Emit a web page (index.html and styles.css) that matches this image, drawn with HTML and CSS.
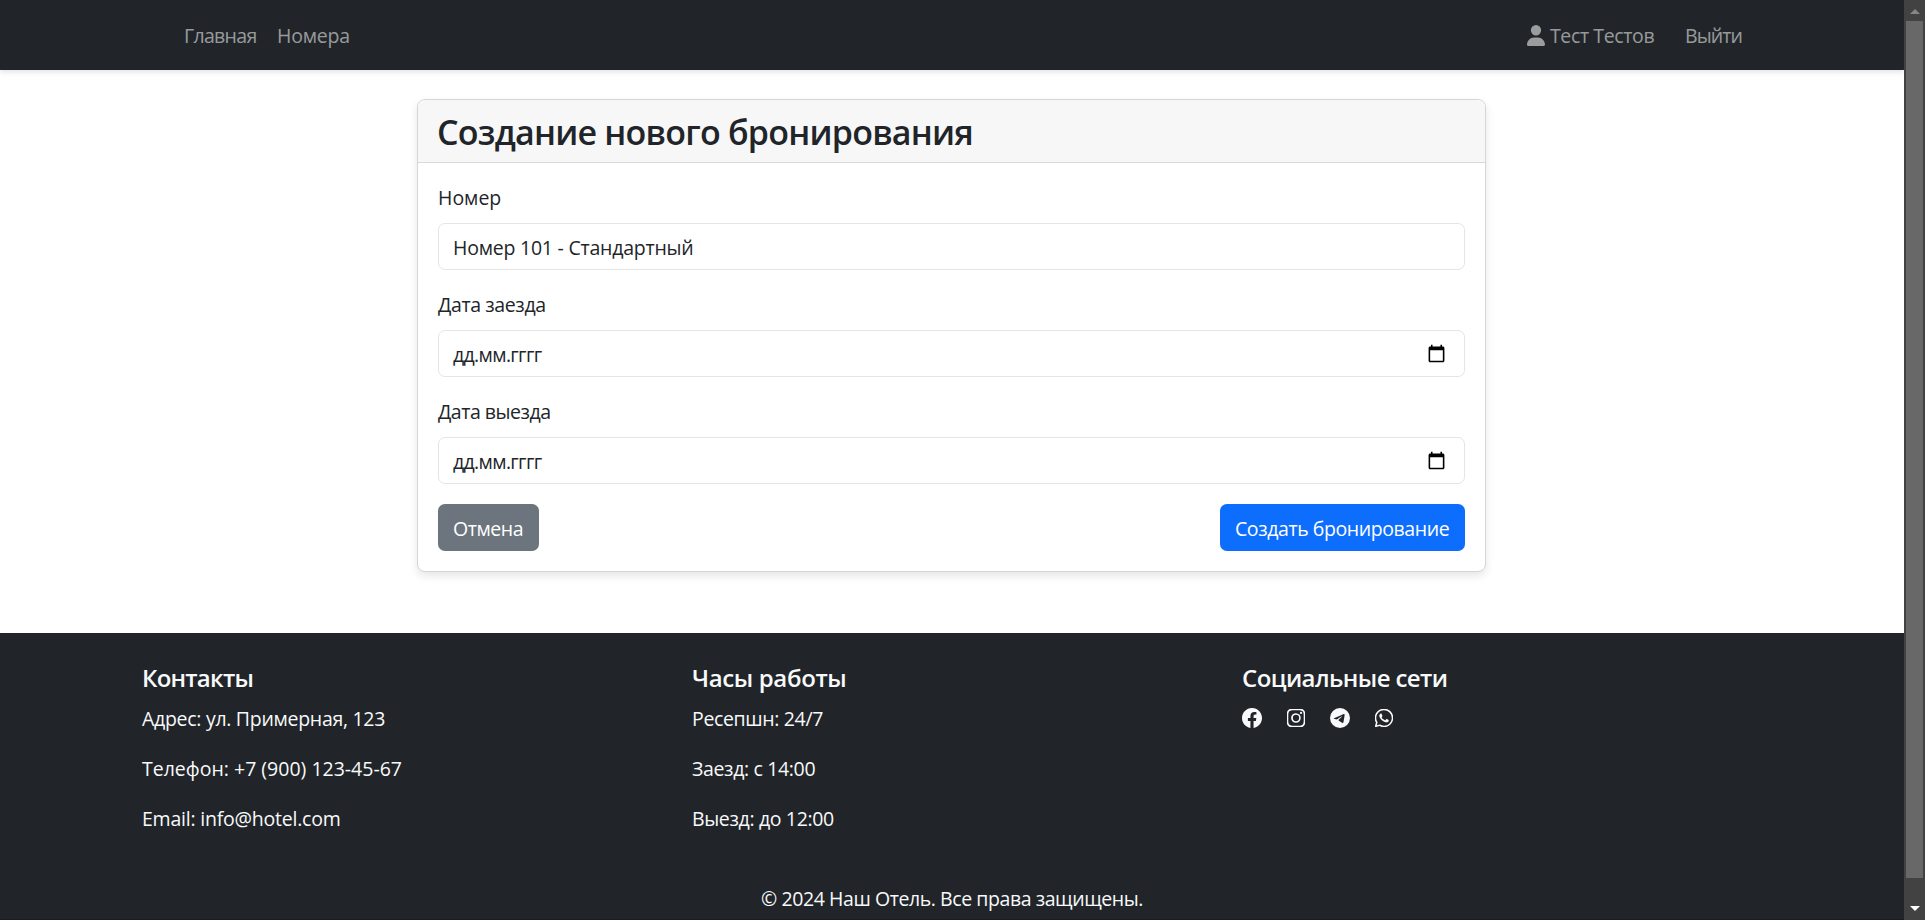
FILE: index.html
```
<!DOCTYPE html>
<html lang="ru">
<head>
<meta charset="utf-8">
<title>Создание нового бронирования</title>
<link rel="stylesheet" href="styles.css">
</head>
<body>
<div class="page">
  <nav class="navbar">
    <div class="nav-group">
      <a class="nav-home">Главная</a>
      <a class="nav-rooms">Номера</a>
    </div>
    <div class="nav-group nav-user-group">
      <a class="nav-user"><svg class="user-icon" viewBox="0 0 448 512" preserveAspectRatio="none"><path d="M224 256A128 128 0 1 0 224 0a128 128 0 1 0 0 256zm-45.7 48C79.8 304 0 383.8 0 482.3C0 498.7 13.3 512 29.7 512H418.3c16.4 0 29.7-13.3 29.7-29.7C448 383.8 368.2 304 269.7 304H178.3z"/></svg><span>Тест Тестов</span></a>
      <a class="nav-logout">Выйти</a>
    </div>
  </nav>
  <main class="main">
    <section class="card">
      <header class="card-header"><h3 class="card-title">Создание нового бронирования</h3></header>
      <div class="card-body">
        <div class="field">
          <label class="label">Номер</label>
          <div class="control"><span class="room-value">Номер 101 - Стандартный</span></div>
        </div>
        <div class="field">
          <label class="label label-in">Дата заезда</label>
          <div class="control"><span class="date-value">дд.мм.гггг</span><svg class="calendar" viewBox="0 0 24 24"><path d="M20 3h-1V1h-2v2H7V1H5v2H4c-1.1 0-2 .9-2 2v16c0 1.1.9 2 2 2h16c1.1 0 2-.9 2-2V5c0-1.1-.9-2-2-2zm0 18H4V8h16v13z"/></svg></div>
        </div>
        <div class="field">
          <label class="label label-out">Дата выезда</label>
          <div class="control"><span class="date-value">дд.мм.гггг</span><svg class="calendar" viewBox="0 0 24 24"><path d="M20 3h-1V1h-2v2H7V1H5v2H4c-1.1 0-2 .9-2 2v16c0 1.1.9 2 2 2h16c1.1 0 2-.9 2-2V5c0-1.1-.9-2-2-2zm0 18H4V8h16v13z"/></svg></div>
        </div>
        <div class="actions">
          <a class="btn btn-cancel">Отмена</a>
          <a class="btn btn-submit">Создать бронирование</a>
        </div>
      </div>
    </section>
  </main>
  <footer class="footer">
    <div class="footer-cols">
      <div>
        <h5 class="footer-title contacts-title">Контакты</h5>
        <p class="footer-text address">Адрес: ул. Примерная, 123</p>
        <p class="footer-text phone">Телефон: +7 (900) 123-45-67</p>
        <p class="footer-text email">Email: info@hotel.com</p>
      </div>
      <div>
        <h5 class="footer-title hours-title">Часы работы</h5>
        <p class="footer-text hours">Ресепшн: 24/7</p>
        <p class="footer-text hours">Заезд: с 14:00</p>
        <p class="footer-text hours">Выезд: до 12:00</p>
      </div>
      <div>
        <h5 class="footer-title">Социальные сети</h5>
        <div class="social">
          <svg viewBox="0 0 16 16"><path d="M16 8.049c0-4.446-3.582-8.05-8-8.05C3.58 0-.002 3.603-.002 8.05c0 4.017 2.926 7.347 6.75 7.951v-5.625h-2.03V8.05H6.75V6.275c0-2.017 1.195-3.131 3.022-3.131.876 0 1.791.157 1.791.157v1.98h-1.009c-.993 0-1.303.621-1.303 1.258v1.51h2.218l-.354 2.326H9.25V16c3.824-.604 6.75-3.934 6.75-7.951"/></svg>
          <svg class="outline" viewBox="0 0 16 16"><path d="M8 0C5.829 0 5.556.01 4.703.048 3.85.088 3.269.222 2.76.42a3.9 3.9 0 0 0-1.417.923A3.9 3.9 0 0 0 .42 2.76C.222 3.268.087 3.85.048 4.7.01 5.555 0 5.827 0 8.001c0 2.172.01 2.444.048 3.297.04.852.174 1.433.372 1.942.205.526.478.972.923 1.417.444.445.89.719 1.416.923.51.198 1.09.333 1.942.372C5.555 15.99 5.827 16 8 16s2.444-.01 3.298-.048c.851-.04 1.434-.174 1.943-.372a3.9 3.9 0 0 0 1.416-.923c.445-.445.718-.891.923-1.417.197-.509.332-1.09.372-1.942C15.99 10.445 16 10.173 16 8s-.01-2.445-.048-3.299c-.04-.851-.175-1.433-.372-1.941a3.9 3.9 0 0 0-.923-1.417A3.9 3.9 0 0 0 13.24.42c-.51-.198-1.092-.333-1.943-.372C10.443.01 10.172 0 7.998 0zm-.717 1.442h.718c2.136 0 2.389.007 3.232.046.78.035 1.204.166 1.486.275.373.145.64.319.92.599s.453.546.598.92c.11.281.24.705.275 1.485.039.843.047 1.096.047 3.231s-.008 2.389-.047 3.232c-.035.78-.166 1.203-.275 1.485a2.5 2.5 0 0 1-.599.919c-.28.28-.546.453-.92.598-.28.11-.704.24-1.485.276-.843.038-1.096.047-3.232.047s-2.39-.009-3.233-.047c-.78-.036-1.203-.166-1.485-.276a2.5 2.5 0 0 1-.92-.598 2.5 2.5 0 0 1-.6-.92c-.109-.281-.24-.705-.275-1.485-.038-.843-.046-1.096-.046-3.233s.008-2.388.046-3.231c.036-.78.166-1.204.276-1.486.145-.373.319-.64.599-.92s.546-.453.92-.598c.282-.11.705-.24 1.485-.276.738-.034 1.024-.044 2.515-.045zm4.988 1.328a.96.96 0 1 0 0 1.92.96.96 0 0 0 0-1.92m-4.27 1.122a4.109 4.109 0 1 0 0 8.217 4.109 4.109 0 0 0 0-8.217m0 1.441a2.667 2.667 0 1 1 0 5.334 2.667 2.667 0 0 1 0-5.334"/></svg>
          <svg viewBox="0 0 16 16"><path d="M16 8A8 8 0 1 1 0 8a8 8 0 0 1 16 0M8.287 5.906q-1.168.486-4.666 2.01-.567.225-.595.442c-.03.243.275.339.69.47l.175.055c.408.133.958.288 1.243.294q.39.01.868-.32 3.269-2.206 3.374-2.23c.05-.012.12-.026.166.016s.042.12.037.141c-.03.129-1.227 1.241-1.846 1.817-.193.18-.33.307-.358.336a8 8 0 0 1-.188.186c-.38.366-.664.64.015 1.088.327.216.589.393.85.571.284.194.568.387.936.629q.14.092.27.187c.331.236.63.448.997.414.214-.02.435-.22.547-.82.265-1.417.786-4.486.906-5.751a1.4 1.4 0 0 0-.013-.315.34.34 0 0 0-.114-.217.53.53 0 0 0-.31-.093c-.3.005-.763.166-2.984 1.09"/></svg>
          <svg class="outline" viewBox="0 0 16 16"><path d="M13.601 2.326A7.85 7.85 0 0 0 7.994 0C3.627 0 .068 3.558.064 7.926c0 1.399.366 2.76 1.057 3.965L0 16l4.204-1.102a7.9 7.9 0 0 0 3.79.965h.004c4.368 0 7.926-3.558 7.93-7.93A7.9 7.9 0 0 0 13.6 2.326zM7.994 14.521a6.6 6.6 0 0 1-3.356-.92l-.24-.144-2.494.654.666-2.433-.156-.251a6.56 6.56 0 0 1-1.007-3.505c0-3.626 2.957-6.584 6.591-6.584a6.56 6.56 0 0 1 4.66 1.931 6.56 6.56 0 0 1 1.928 4.66c-.004 3.639-2.961 6.592-6.592 6.592m3.615-4.934c-.197-.099-1.17-.578-1.353-.646-.182-.065-.315-.099-.445.099-.133.197-.513.646-.627.775-.114.133-.232.148-.43.05-.197-.1-.836-.308-1.592-.985-.59-.525-.985-1.175-1.103-1.372-.114-.198-.011-.304.088-.403.087-.088.197-.232.296-.346.1-.114.133-.198.198-.33.065-.134.034-.248-.015-.347-.05-.099-.445-1.076-.612-1.47-.16-.389-.323-.335-.445-.34-.114-.007-.247-.007-.38-.007a.73.73 0 0 0-.529.247c-.182.198-.691.677-.691 1.654s.71 1.916.81 2.049c.098.133 1.394 2.132 3.383 2.992.47.205.84.326 1.129.418.475.152.904.129 1.246.08.38-.058 1.171-.48 1.338-.943.164-.464.164-.86.114-.943-.049-.084-.182-.133-.38-.232"/></svg>
        </div>
      </div>
    </div>
    <p class="copyright">© 2024 Наш Отель. Все права защищены.</p>
  </footer>
</div>
<aside class="scrollbar">
  <svg class="arrow arrow-up" viewBox="0 0 10 5"><path d="M0 5 5 0l5 5z"/></svg>
  <div class="thumb"></div>
  <svg class="arrow arrow-down" viewBox="0 0 10 5"><path d="M0 0h10L5 5z"/></svg>
</aside>
</body>
</html>
```
FILE: styles.css
```
* { box-sizing: border-box; }
body {
  margin: 0;
  height: 920px;
  overflow: hidden;
  display: flex;
  background: #fff;
  color: #212529;
  font: 19.5px/30px "Open Sans", "Noto Sans", sans-serif;
  white-space: nowrap;
}
h3, h5, p { margin: 0; }
svg { display: block; fill: currentColor; flex: none; }

.page { width: 1904px; height: 920px; display: flex; flex-direction: column; overflow: hidden; border-bottom: 1px solid #1a1c20; }

.navbar {
  flex: none;
  height: 70px;
  padding: 2px 161px 0 184px;
  display: flex;
  align-items: center;
  justify-content: space-between;
  background: #212529;
  color: rgba(255, 255, 255, .55);
  box-shadow: 0 2.5px 5px rgba(0, 0, 0, .1);
}
.nav-group { display: flex; }
.nav-home { width: 93px; letter-spacing: -.68px; }
.nav-rooms { letter-spacing: -.2px; }
.nav-user { display: flex; align-items: center; width: 158px; gap: 5px; letter-spacing: -.38px; }
.user-icon { width: 18px; height: 21px; margin-top: -1px; }
.nav-logout { width: 58px; letter-spacing: -.93px; }

.main { flex: none; height: 563px; padding-top: 29px; display: flex; justify-content: center; align-items: flex-start; }
.card {
  width: 1069px;
  height: 473px;
  margin-right: 1px;
  border: 1px solid #d6d6d6;
  border-radius: 8px;
  background: #fff;
  box-shadow: 0 4px 8px rgba(0, 0, 0, .1);
  overflow: hidden;
}
.card-header { height: 63px; padding: 11px 20px 0 19px; background: #f7f7f7; border-bottom: 1px solid #d9d9d9; }
.card-title { font-size: 34px; line-height: 42px; font-weight: 550; letter-spacing: -.77px; }
.card-body { padding: 20px; }
.field { margin-bottom: 20px; }
.label { display: block; height: 40px; }
.label-in { letter-spacing: -.39px; }
.label-out { letter-spacing: -.48px; }
.control {
  height: 47px;
  padding: 3px 18px 0 14px;
  display: flex;
  align-items: center;
  justify-content: space-between;
  border: 1px solid #e2e5e9;
  border-radius: 7px;
}
.room-value { letter-spacing: -.23px; }
.date-value { letter-spacing: -.65px; }
.calendar { width: 19px; height: 19px; margin-top: -4px; color: #000; }
.actions { display: flex; justify-content: space-between; }
.btn { height: 47px; padding: 10px 0 0 15px; border-radius: 7px; color: #fff; }
.btn-cancel { width: 101px; background: #6c757d; letter-spacing: -.44px; }
.btn-submit { width: 245px; background: #0d6efd; letter-spacing: -.42px; }

.footer { flex: none; height: 287px; padding-top: 30px; background: #212529; color: #f8f9fa; }
.footer-cols { display: grid; grid-template-columns: repeat(3, 550px); padding-left: 142px; height: 220px; }
.footer-title { height: 40px; font-size: 24px; line-height: 30px; font-weight: 550; letter-spacing: -.58px; }
.contacts-title { letter-spacing: -.75px; }
.hours-title { letter-spacing: -.36px; }
.footer-text { height: 50px; padding-top: 1px; }
.address { letter-spacing: -.29px; }
.email { letter-spacing: -.22px; }
.hours { letter-spacing: -.35px; }
.social { display: flex; gap: 24px; padding-top: 5px; }
.social svg { width: 20px; height: 20px; }
.social .outline { padding: .6px; }
.copyright { padding-top: 1px; text-align: center; letter-spacing: -.43px; }

.scrollbar { width: 21px; height: 920px; background: #424242; display: flex; flex-direction: column; align-items: center; padding-top: 9px; }
.arrow { width: 10px; height: 5px; }
.arrow-up { color: #868686; }
.thumb { width: 17px; height: 857px; margin: 7px 0 28px; background: #686868; flex: none; }
.arrow-down { color: #fff; }
```
